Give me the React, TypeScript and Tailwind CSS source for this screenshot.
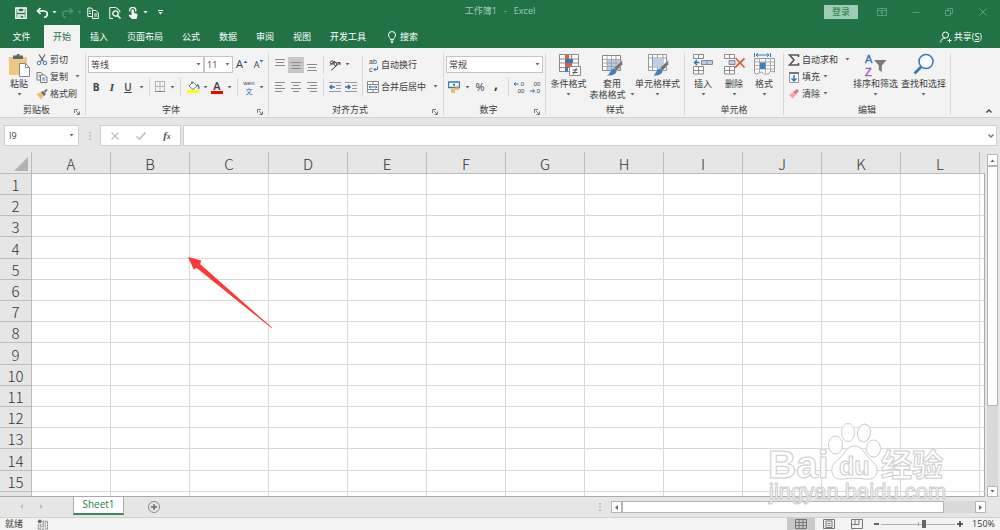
import { useState, type ReactNode } from "react";

/**
 * Spreadsheet window: title bar, ribbon, formula bar, cell grid,
 * sheet tabs and status bar.
 */

const COLUMNS = ["A", "B", "C", "D", "E", "F", "G", "H", "I", "J", "K", "L"];
const ROWS = Array.from({ length: 15 }, (_, i) => i + 1);
const TABS = ["插入", "页面布局", "公式", "数据", "审阅", "视图", "开发工具"];

function Caret({ className = "text-[#6a6a6a]" }: { className?: string }) {
  return (
    <svg viewBox="0 0 5 3" className={`h-[3px] w-[5px] shrink-0 ${className}`} aria-hidden="true">
      <path d="M.5 0h4L2.500 2.500z" fill="currentColor" />
    </svg>
  );
}

function Icon({ size = "size-3", box = "0 0 12 12", children }: { size?: string; box?: string; children: ReactNode }) {
  return (
    <svg viewBox={box} className={`${size} shrink-0`} fill="none" stroke="currentColor" strokeWidth={1} aria-hidden="true">
      {children}
    </svg>
  );
}

/* ---- Ribbon building blocks ---- */

function Group({ label, width, launcher, children }: { label: string; width: string; launcher?: boolean; children: ReactNode }) {
  return (
    <section aria-label={label} className={`flex shrink-0 flex-col ${width}`}>
      <div className="flex h-[51px] items-start">{children}</div>
      <div className="flex h-[15px] items-center">
        <span className="w-1" />
        <span className="flex-1 text-center">{label}</span>
        <span className={`flex justify-center pt-1 ${launcher ? "w-4" : "w-1"}`}>
          {launcher && (
            <button type="button" aria-label={`${label}设置`} className="text-[#777]">
              <Icon size="size-[6px]" box="0 0 6 6">
                <path d="M.5 4V.5H4M2 2l3 3M5.500 2.500v3h-3" />
              </Icon>
            </button>
          )}
        </span>
      </div>
    </section>
  );
}

function GroupLine() {
  return <div className="my-[2px] w-px shrink-0 bg-[#d8d8d8]" />;
}

function Line() {
  return <span className="h-[18px] w-px shrink-0 bg-[#d8d8d8]" />;
}

function SmallButton({ label, width = "w-4", active, children }: { label: string; width?: string; active?: boolean; children: ReactNode }) {
  return (
    <button
      type="button"
      aria-label={label}
      className={`flex h-4 shrink-0 items-center justify-center ${width} ${active ? "bg-[#c8c8c8]" : ""}`}
    >
      {children}
    </button>
  );
}

function TextButton({ icon, label, caret, wide }: { icon: ReactNode; label: string; caret?: boolean; wide?: boolean }) {
  return (
    <button type="button" className="flex h-[17px] items-center gap-[2px] whitespace-nowrap">
      {icon}
      <span>{label}</span>
      {caret && (
        <span className={wide ? "pl-[5px]" : "pl-px"}>
          <Caret />
        </span>
      )}
    </button>
  );
}

function BigButton({ icon, label, second, width }: { icon: ReactNode; label: string; second?: string; width: string }) {
  return (
    <button type="button" className={`flex shrink-0 flex-col items-center whitespace-nowrap pt-[2px] ${width}`}>
      {icon}
      <span className="h-[13px] leading-[13px]">{label}</span>
      <span className="flex h-[9px] items-center gap-1 leading-[9px]">
        {second}
        <Caret />
      </span>
    </button>
  );
}

function Combo({ label, value, width }: { label: string; value: string; width: string }) {
  return (
    <span className={`relative flex h-[17px] items-center border border-[#c6c6c6] bg-white ${width}`}>
      <select aria-label={label} className="h-full w-full appearance-none bg-transparent pl-[2px] text-[9px] text-[#444] outline-none">
        <option>{value}</option>
      </select>
      <span className="pointer-events-none absolute right-[2px] flex">
        <Caret />
      </span>
    </span>
  );
}

function Lines({ rows }: { rows: [number, number, number][] }) {
  return (
    <Icon>
      {rows.map(([x, y, w]) => (
        <path key={y} d={`M${x} ${y}.5h${w}`} stroke="#8c8c8c" />
      ))}
    </Icon>
  );
}

/* ---- Drawings for the large buttons ---- */

function PasteIcon() {
  return (
    <Icon size="size-6" box="0 0 24 24">
      <path d="M2 4h18v18H2z" fill="#edc87e" stroke="none" />
      <path d="M6 2.500h3.500a1.700 1.700 0 0 1 3.400 0H16V6H6z" fill="#666" stroke="none" />
      <path d="M12.500 10.500h6l4 4v9h-10z" fill="#fff" stroke="#888" />
      <path d="M18.500 10.500v4h4" stroke="#888" />
    </Icon>
  );
}

function ConditionalIcon() {
  return (
    <Icon size="size-6" box="0 0 24 24">
      <path d="M2.500 1.500h19v17h-19zM8.500 1.500v17M14.500 1.500v17M2.500 6h19M2.500 10h19M2.500 14.500h19" fill="#fff" stroke="#8a8a8a" />
      <path d="M8 2h4v4H8zM8 10h7v4H8z" fill="#dc5f3d" stroke="none" />
      <path d="M8 6h8v4H8zM8 14h3v4.500H8z" fill="#3d77bb" stroke="none" />
      <path d="M12.500 13.500h11v9h-11z" fill="#fff" stroke="#888" />
      <path d="M15.500 17h5M15.500 19.500h5M19.500 15l-3 6.500" stroke="#555" />
    </Icon>
  );
}

function Brush() {
  return (
    <>
      <path d="M22.500 7v4.500l-6 6.500-3-3z" fill="#747474" stroke="#f2f2f2" strokeWidth={0.5} />
      <path d="M14 15.500l2.500 2.500c0 3-4 5-9.500 4.500 3-1 3-6 7-7z" fill="#3f7fc1" stroke="none" />
    </>
  );
}

function TableFormatIcon() {
  return (
    <Icon size="size-6" box="0 0 24 24">
      <path d="M2.500 2.500h18v15h-18z" fill="#fff" stroke="#888" />
      <path d="M7 6.500h13v10.500H7z" fill="#b9d2ec" stroke="none" />
      <path d="M2.500 6.500h18M2.500 10h18M2.500 13.500h18M7 2.500v15M11.500 2.500v15M16 2.500v15" stroke="#999" strokeWidth={0.8} />
      <Brush />
    </Icon>
  );
}

function CellStyleIcon() {
  return (
    <Icon size="size-6" box="0 0 24 24">
      <path d="M2.500 1.500h18v16h-18zM2.500 5h18M2.500 14h18M6.500 1.500v16M17 1.500v16M11.500 1.500V5M11.500 14v3.500" fill="#fff" stroke="#999" />
      <path d="M7 5.500h10v8H7z" fill="#b9d2ec" stroke="none" />
      <Brush />
    </Icon>
  );
}

function InsertIcon() {
  return (
    <Icon size="size-6" box="0 0 24 24">
      <path d="M2.500 1.500h10v4h-10zM7.500 1.500v4M2.500 13.500h10v7.500h-10zM7.500 13.500V21M2.500 17.500h10" fill="#fff" stroke="#8a8a8a" />
      <path d="M10.500 7.500h11v4h-11zM16 7.500v4" fill="#b9d2ec" stroke="#888" />
      <path d="M8.500 9.500h-5M6 7L3.500 9.500 6 12" stroke="#2f74bd" strokeWidth={1.400} />
    </Icon>
  );
}

function DeleteIcon() {
  return (
    <Icon size="size-6" box="0 0 24 24">
      <path d="M2.500 1.500h10v4h-10zM7.500 1.500v4M2.500 13.500h10v7.500h-10zM7.500 13.500V21M2.500 17.500h10" fill="#fff" stroke="#8a8a8a" />
      <path d="M7 7.500h6v4H7z" fill="#b9d2ec" stroke="#888" />
      <path d="M13.500 5l9 9.500M22.500 5.500l-9.500 9" stroke="#e0603d" strokeWidth={1.800} />
    </Icon>
  );
}

function FormatIcon() {
  return (
    <Icon size="size-6" box="0 0 24 24">
      <path d="M2.500 0v4M18.500 0v4M4 2h13M6 .3L4 2l2 1.700M15 .3L17 2l-2 1.700" stroke="#3578bd" />
      <path d="M2.500 5.500h20V19l-4-1-2 3h-4l-3-2-5 2-2-1z" fill="#fff" stroke="#999" />
      <path d="M2.500 9h20M2.500 16h20M7.500 5.500v14M13.500 5.500V20M18.500 5.500V18M2.500 12.500h20" stroke="#aaa" />
      <path d="M8 9.500h5.500V16H8z" fill="#3f7fc1" stroke="none" />
    </Icon>
  );
}

function SortIcon() {
  return (
    <svg viewBox="0 0 24 24" className="size-6 shrink-0" aria-hidden="true">
      <text x="1" y="10" className="font-['Liberation_Sans'] text-[11px]" fill="#3173b8" stroke="#3173b8" strokeWidth=".4">A</text>
      <text x="1" y="23" className="font-['Liberation_Sans'] text-[11px]" fill="#9956b5" stroke="#9956b5" strokeWidth=".4">Z</text>
      <path d="M10 7h12.500l-4.700 5.500V19l-3-2v-4.500z" fill="#7a7a7a" />
    </svg>
  );
}

function FindIcon() {
  return (
    <Icon size="size-6" box="0 0 24 24">
      <circle cx="14" cy="8.500" r="7" fill="#fff" stroke="#3b79bb" strokeWidth={1.600} />
      <path d="M9 14l-6.500 6.500" stroke="#3b79bb" strokeWidth={2.800} />
    </Icon>
  );
}

/* ---- Window parts ---- */

function TitleBar() {
  return (
    <header className="flex h-[25px] shrink-0 items-center text-white">
      <div className="flex flex-1 items-center">
        <span className="w-[15px]" />
        <SmallButton label="保存" width="w-3">
          <Icon>
            <path d="M.8 1h10.400v10.400H.8zM3 1v4h6V1M3 11.400V8h6v3.400M5 9v2" strokeWidth={1.400} />
          </Icon>
        </SmallButton>
        <span className="w-[9px]" />
        <SmallButton label="撤消" width="w-3">
          <Icon>
            <path d="M4.500 1L1.500 4l3 3M2 4h5.500C12.500 4 12.500 10 8 10.500" strokeWidth={1.700} />
          </Icon>
        </SmallButton>
        <span className="w-1" />
        <Caret className="text-white" />
        <span className="w-[5px]" />
        <SmallButton label="恢复" width="w-3">
          <span className="text-[#4f9370]">
            <Icon>
              <path d="M7.500 1l3 3-3 3M10 4H4.500C-.5 4-.5 10 4 10.500" strokeWidth={1.400} />
            </Icon>
          </span>
        </SmallButton>
        <span className="w-[3px]" />
        <Caret className="text-[#4f9370]" />
        <span className="w-[5px]" />
        <SmallButton label="复制" width="w-3">
          <Icon>
            <path d="M5 9.500H.8V1h3.500l2 2M5.500 3.500h3.500l2.300 2.300v5.700H5.500zM7 7h3M7 9h3M2 4h2M2 6.500h2" />
          </Icon>
        </SmallButton>
        <span className="w-[10px]" />
        <SmallButton label="打印预览" width="w-3">
          <Icon>
            <path d="M4 11.500H.8V.5h6l4 3v2" />
            <circle cx="6.500" cy="6.500" r="2.700" strokeWidth={1.300} />
            <path d="M8.500 8.500l3 3" strokeWidth={1.500} />
          </Icon>
        </SmallButton>
        <span className="w-[6px]" />
        <SmallButton label="触摸/鼠标模式" width="w-3">
          <Icon>
            <path d="M3 4.500a3 3 0 1 1 5.500 0" strokeWidth={1.300} />
            <path d="M4.500 3.500a1.200 1.200 0 0 1 2.400 0V6l3 .8c.7.2.7 1 .5 2L9.500 12H5L1.500 8.500l1-1 2 1z" fill="currentColor" stroke="none" />
          </Icon>
        </SmallButton>
        <span className="w-1" />
        <Caret className="text-white" />
        <span className="w-[10px]" />
        <button type="button" aria-label="自定义快速访问工具栏" className="flex flex-col items-center gap-px">
          <span className="h-px w-[5px] bg-white" />
          <Caret className="text-white" />
        </button>
      </div>
      <h1 className="whitespace-pre pb-[3px] text-[9px] text-[#a3cab4]">工作簿1   -   Excel</h1>
      <div className="flex flex-1 items-center justify-end pb-[2px] text-[#5b9c79]">
        <button type="button" className="mr-[18px] h-[14px] w-[34px] bg-[#9fcdb3] leading-[14px] text-[#217346]">登录</button>
        <SmallButton label="功能区显示选项" width="w-3">
          <Icon>
            <path d="M1.500 2.500h9v7h-9zM1.500 4.500h9M6 9V6M4.500 7L6 5.500 7.500 7" />
          </Icon>
        </SmallButton>
        <span className="w-[22px]" />
        <SmallButton label="最小化" width="w-3">
          <Icon><path d="M2.500 6.500h7" /></Icon>
        </SmallButton>
        <span className="w-[21px]" />
        <SmallButton label="还原" width="w-3">
          <Icon><path d="M2.500 4.500h5v5h-5zM4.500 4.500v-2h5v5h-2" /></Icon>
        </SmallButton>
        <span className="w-[22px]" />
        <SmallButton label="关闭" width="w-3">
          <Icon><path d="M2.500 2.500l7 7M9.500 2.500l-7 7" /></Icon>
        </SmallButton>
        <span className="w-[11px]" />
      </div>
    </header>
  );
}

function TabBar() {
  return (
    <nav className="flex h-[23px] shrink-0 items-stretch gap-px text-white">
      <button type="button" className="w-[43px]">文件</button>
      <button type="button" className="w-9 bg-[#f3f3f3] text-[#217346]">开始</button>
      {TABS.map((tab) => (
        <button key={tab} type="button" className="px-[9px]">{tab}</button>
      ))}
      <button type="button" className="ml-[10px] flex items-center gap-[2px]">
        <Icon>
          <path d="M4.500 8.500C4.500 7 2.500 6 2.500 4a3.500 3.500 0 0 1 7 0c0 2-2 3-2 4.500zM4.500 10h3M5 11.500h2" />
        </Icon>
        搜索
      </button>
      <span className="flex-1" />
      <button type="button" className="mr-[18px] flex items-center gap-[2px]">
        <Icon>
          <circle cx="5.500" cy="4" r="3" />
          <path d="M.7 11.500c0-3 2-4.500 4.500-4.500M9.500 7.500v4M7.500 9.500h4" />
        </Icon>
        <span>共享(<u>S</u>)</span>
      </button>
    </nav>
  );
}

function Ribbon() {
  return (
    <div className="flex h-[70px] shrink-0 overflow-hidden border-b border-[#d2d2d2] bg-[#f3f3f3] pt-[3px]">
      <Group label="剪贴板" width="w-[85px]" launcher>
        <div className="w-9 pl-px">
          <BigButton icon={<PasteIcon />} label="粘贴" width="w-9" />
        </div>
        <div className="flex flex-col">
          <TextButton
            label="剪切"
            icon={
              <Icon>
                <path d="M3 .5l4.500 7M9 .5L4.500 7.500" stroke="#666" strokeWidth={1.300} />
                <circle cx="3" cy="9" r="1.800" stroke="#3b79bb" />
                <circle cx="9" cy="9" r="1.800" stroke="#3b79bb" />
              </Icon>
            }
          />
          <TextButton
            label="复制"
            caret
            wide
            icon={
              <Icon>
                <path d="M1 1.500h4l1.500 1.500v6H1z" fill="#fff" stroke="#777" />
                <path d="M4.500 4h4l2.500 2v5.500H4.500z" fill="#fff" stroke="#777" />
                <path d="M6 7h3.500M6 9h3.500M2.500 4h1.500M2.500 6h1.500" stroke="#3b79bb" />
              </Icon>
            }
          />
          <TextButton
            label="格式刷"
            icon={
              <Icon>
                <path d="M.5 6l5-2 2.500 3.500L5 11.500z" fill="#edbd72" stroke="none" />
                <path d="M5 4l2-1 3 3-2 2z" fill="#666" stroke="none" />
                <path d="M8.500 4L11 1.500" stroke="#777" strokeWidth={1.800} />
              </Icon>
            }
          />
        </div>
      </Group>
      <GroupLine />

      <Group label="字体" width="w-[182px]" launcher>
        <div className="flex flex-col gap-[5px] pl-[2px] pt-[5px]">
          <div className="flex items-center">
            <Combo label="字体名称" value="等线" width="w-[116px]" />
            <Combo label="字号" value="11" width="w-[29px]" />
            <SmallButton label="增大字号" width="w-[18px]">
              <span className="text-[11px]">A</span>
              <span className="pb-[6px] text-[#2f74bd]">
                <Icon size="h-[3px] w-[5px]" box="0 0 5 3"><path d="M.5 3h4L2.500.500z" fill="currentColor" stroke="none" /></Icon>
              </span>
            </SmallButton>
            <SmallButton label="减小字号">
              <span className="text-[9px]">A</span>
              <span className="pb-[7px]"><Caret className="text-[#2f74bd]" /></span>
            </SmallButton>
          </div>
          <div className="flex items-center text-[10px]">
            <SmallButton label="加粗"><b>B</b></SmallButton>
            <SmallButton label="倾斜"><i className="font-['Liberation_Serif'] text-[11px] font-bold">I</i></SmallButton>
            <SmallButton label="下划线"><b className="font-semibold underline">U</b></SmallButton>
            <SmallButton label="下划线样式" width="w-[10px]"><Caret /></SmallButton>
            <span className="w-[3px]" /><Line /><span className="w-[3px]" />
            <SmallButton label="边框" width="w-[14px]">
              <Icon>
                <path d="M1 .5h10M1 5.500h10M1.500 1v10M6 1v10M10.500 1v10" stroke="#b4b4b4" />
                <path d="M1 10.500h10" stroke="#888" />
              </Icon>
            </SmallButton>
            <SmallButton label="边框样式" width="w-[10px]"><Caret /></SmallButton>
            <span className="w-[3px]" /><Line /><span className="w-[5px]" />
            <SmallButton label="填充颜色" width="w-[14px]">
              <Icon size="h-3 w-[13px]" box="0 0 13 12">
                <path d="M2 5l4-4 4 4-4 3.500z" fill="#fff" stroke="#777" />
                <path d="M5 3V.5M10 3.500c2 1 2 3 1.500 4.500" stroke="#3b79bb" strokeWidth={1.500} />
                <path d="M.5 9h12v3H.5z" fill="#ff0" stroke="none" />
              </Icon>
            </SmallButton>
            <SmallButton label="填充颜色选项" width="w-[10px]"><Caret /></SmallButton>
            <SmallButton label="字体颜色" width="w-[14px]">
              <span className="flex flex-col items-center">
                <span className="h-[10px] text-[11px] font-semibold leading-[10px]">A</span>
                <span className="h-[3px] w-3 bg-[#f00]" />
              </span>
            </SmallButton>
            <SmallButton label="字体颜色选项" width="w-[10px]"><Caret /></SmallButton>
            <span className="w-[3px]" /><Line /><span className="w-1" />
            <SmallButton label="拼音" width="w-[14px]">
              <svg viewBox="0 0 14 18" className="h-[18px] w-[14px] shrink-0" aria-hidden="true">
                <text x="7" y="7" textAnchor="middle" className="font-['Liberation_Sans'] text-[6px]" fill="#444">wén</text>
                <text x="7" y="16" textAnchor="middle" className="font-['Noto_Sans_CJK_SC'] text-[7px]" fill="#2f74bd">文</text>
              </svg>
            </SmallButton>
            <SmallButton label="拼音选项" width="w-[10px]"><Caret /></SmallButton>
          </div>
        </div>
      </Group>
      <GroupLine />

      <Group label="对齐方式" width="w-[174px]" launcher>
        <div className="flex flex-col gap-[5px] pl-[3px] pt-[5px]">
          <div className="flex h-[17px] items-center">
            <SmallButton label="顶端对齐"><Lines rows={[[1, 0, 10], [2, 3, 8], [1, 6, 10]]} /></SmallButton>
            <SmallButton label="垂直居中" active><Lines rows={[[1, 3, 10], [2, 6, 8], [1, 9, 10]]} /></SmallButton>
            <SmallButton label="底端对齐"><Lines rows={[[1, 5, 10], [2, 8, 8], [1, 11, 10]]} /></SmallButton>
            <span className="w-[3px]" /><Line /><span className="w-[3px]" />
            <SmallButton label="方向" width="w-4">
              <Icon>
                <circle cx="3" cy="3.500" r="1.600" />
                <circle cx="6.500" cy="5" r="1.600" />
                <path d="M1 6.500l4-4M5 2l2.500 2.500M2 11.500l9-8M8.500 3.500H11V6" />
              </Icon>
            </SmallButton>
            <SmallButton label="方向选项" width="w-2"><Caret /></SmallButton>
          </div>
          <div className="flex items-center">
            <SmallButton label="左对齐"><Lines rows={[[1, 1, 10], [1, 4, 7], [1, 7, 10], [1, 10, 7]]} /></SmallButton>
            <SmallButton label="居中"><Lines rows={[[1, 1, 10], [3, 4, 6], [1, 7, 10], [3, 10, 6]]} /></SmallButton>
            <SmallButton label="右对齐"><Lines rows={[[1, 1, 10], [4, 4, 7], [1, 7, 10], [4, 10, 7]]} /></SmallButton>
            <span className="w-[3px]" /><Line /><span className="w-[3px]" />
            <SmallButton label="减少缩进量">
              <Icon>
                <path d="M0 1.500h12M7 4.500h5M7 7.500h5M0 10.500h12" stroke="#999" />
                <path d="M6 6H1M3 4L1 6l2 2" stroke="#2f74bd" strokeWidth={1.500} />
              </Icon>
            </SmallButton>
            <SmallButton label="增加缩进量">
              <Icon>
                <path d="M0 1.500h12M7 4.500h5M7 7.500h5M0 10.500h12" stroke="#999" />
                <path d="M0 6h5M3 4l2 2-2 2" stroke="#2f74bd" strokeWidth={1.500} />
              </Icon>
            </SmallButton>
          </div>
        </div>
        <div className="ml-[3px] mt-[5px] h-[41px] w-px bg-[#d8d8d8]" />
        <div className="flex flex-col gap-[5px] pl-1 pt-[5px]">
          <TextButton
            label="自动换行"
            icon={
              <svg viewBox="0 0 12 18" className="h-[18px] w-3 shrink-0" aria-hidden="true">
                <text x="2" y="8" className="font-['Liberation_Sans'] text-[7px]" fill="#444">ab</text>
                <text x="2" y="16" className="font-['Liberation_Sans'] text-[7px]" fill="#444">c</text>
                <path d="M10.500 10.500v3H7M8.500 12L7 13.500 8.500 15" fill="none" stroke="#2f74bd" />
              </svg>
            }
          />
          <TextButton
            label="合并后居中"
            caret
            wide
            icon={
              <Icon>
                <path d="M.5.500h11v11H.5zM.5 3.500h11M.5 8.500h11M6 .5v3M6 8.500v3" fill="#fff" stroke="#888" />
                <path d="M2 6h8M3.500 4.700L2 6l1.500 1.300M8.500 4.700L10 6 8.500 7.300" stroke="#2f74bd" />
              </Icon>
            }
          />
        </div>
      </Group>
      <GroupLine />

      <Group label="数字" width="w-[101px]" launcher>
        <div className="flex flex-col gap-[5px] pl-[2px] pt-[5px]">
          <Combo label="数字格式" value="常规" width="w-[97px]" />
          <div className="flex items-center">
            <SmallButton label="会计数字格式">
              <Icon>
                <path d="M.5 1h11v5.500H.5z" fill="#fff" stroke="#3b79bb" strokeWidth={1.400} />
                <circle cx="6" cy="3.700" r="1.200" fill="#3b79bb" stroke="none" />
                <path d="M7 6h4M7 8h4M3 9h4M3 11h4" stroke="#e6a94c" strokeWidth={1.500} />
              </Icon>
            </SmallButton>
            <SmallButton label="货币选项" width="w-[10px]"><Caret /></SmallButton>
            <SmallButton label="百分比样式"><span className="text-[11px]">%</span></SmallButton>
            <SmallButton label="千位分隔样式"><b className="pb-2 text-[14px]">,</b></SmallButton>
            <span className="w-1" /><Line /><span className="w-[2px]" />
            <SmallButton label="增加小数位数">
              <svg viewBox="0 0 12 14" className="h-[14px] w-3 shrink-0" aria-hidden="true">
                <text x="6" y="6" className="font-['Liberation_Sans'] text-[6px]" fill="#444">.0</text>
                <text x="3" y="13" className="font-['Liberation_Sans'] text-[6px]" fill="#444">.00</text>
                <path d="M5.500 4H1M2.800 2.300L1 4l1.800 1.700" fill="none" stroke="#2f74bd" />
              </svg>
            </SmallButton>
            <SmallButton label="减少小数位数">
              <svg viewBox="0 0 12 14" className="h-[14px] w-3 shrink-0" aria-hidden="true">
                <text x="3" y="6" className="font-['Liberation_Sans'] text-[6px]" fill="#444">.00</text>
                <text x="6" y="13" className="font-['Liberation_Sans'] text-[6px]" fill="#444">.0</text>
                <path d="M1 11h4.500M3.700 9.300L5.500 11l-1.800 1.700" fill="none" stroke="#2f74bd" />
              </svg>
            </SmallButton>
          </div>
        </div>
      </Group>
      <GroupLine />

      <Group label="样式" width="w-[138px]">
        <BigButton icon={<ConditionalIcon />} label="条件格式" width="w-[45px]" />
        <BigButton icon={<TableFormatIcon />} label="套用" second="表格格式" width="w-[42px]" />
        <BigButton icon={<CellStyleIcon />} label="单元格样式" width="w-[49px]" />
      </Group>
      <GroupLine />

      <Group label="单元格" width="w-[98px]">
        <span className="w-[2px]" />
        <BigButton icon={<InsertIcon />} label="插入" width="w-8" />
        <BigButton icon={<DeleteIcon />} label="删除" width="w-[30px]" />
        <BigButton icon={<FormatIcon />} label="格式" width="w-[30px]" />
      </Group>
      <GroupLine />

      <Group label="编辑" width="w-[166px]">
        <div className="flex w-[68px] flex-col pl-1">
          <TextButton
            label="自动求和"
            caret
            wide
            icon={<Icon><path d="M10.500 3V1H1.500L6 6l-4.500 5h9V9" stroke="#555" strokeWidth={1.600} /></Icon>}
          />
          <TextButton
            label="填充"
            caret
            icon={
              <Icon>
                <path d="M1.500 1.500h9v10h-9z" fill="#fff" stroke="#999" />
                <path d="M1 1h10v2H1z" fill="#777" stroke="none" />
                <path d="M6 4v6M3.500 7.500L6 10l2.500-2.500" stroke="#2f74bd" strokeWidth={1.500} />
              </Icon>
            }
          />
          <TextButton
            label="清除"
            caret
            icon={
              <Icon>
                <path d="M1 7l3.500-2.500 3 3L4.500 10.500z" fill="#f3a6b2" stroke="none" />
                <path d="M5 4l4-3 2 2-3.500 4z" fill="#e8748a" stroke="none" />
              </Icon>
            }
          />
        </div>
        <BigButton icon={<SortIcon />} label="排序和筛选" width="w-[47px]" />
        <BigButton icon={<FindIcon />} label="查找和选择" width="w-[49px]" />
      </Group>
      <GroupLine />
      <div className="flex flex-1 items-end justify-end pb-[3px] pr-2">
        <button type="button" aria-label="折叠功能区">
          <Icon size="size-[6px]" box="0 0 6 6"><path d="M.5 4.500L3 2l2.500 2.500" strokeWidth={1.300} /></Icon>
        </button>
      </div>
    </div>
  );
}

function FormulaBar() {
  return (
    <div className="flex h-[34px] shrink-0 items-start bg-[#e6e6e6] pl-1 pr-[3px] pt-[7px] text-[#777]">
      <div className="flex h-[21px] w-[75px] items-center border border-[#cfcfcf] bg-white pr-1">
        <input aria-label="名称框" defaultValue="I9" className="w-full min-w-0 bg-transparent pl-1 text-[9px] text-[#444] outline-none" />
        <Caret />
      </div>
      <span className="flex h-[21px] w-[21px] items-center justify-center text-[#a0a0a0]">
        <Icon size="h-2 w-[2px]" box="0 0 2 8"><path d="M1 0v8" strokeWidth={1.300} strokeDasharray="1.300 2" /></Icon>
      </span>
      <div className="flex h-[21px] w-[81px] items-center border border-[#cfcfcf] bg-white">
        <button type="button" aria-label="取消" className="flex w-[27px] justify-center text-[#bdbdbd]">
          <Icon size="size-2" box="0 0 8 8"><path d="M.5.500l7 7M7.500.500l-7 7" strokeWidth={1.300} /></Icon>
        </button>
        <button type="button" aria-label="输入" className="flex w-[26px] justify-center text-[#bdbdbd]">
          <Icon size="h-2 w-[10px]" box="0 0 10 8"><path d="M.5 4.500l3 2.500L9.500.500" strokeWidth={1.600} /></Icon>
        </button>
        <button type="button" aria-label="插入函数" className="flex w-[26px] items-baseline justify-center font-['Liberation_Serif'] font-bold italic text-[#555]">
          <span className="text-[11px]">f</span>
          <span className="text-[8px]">x</span>
        </button>
      </div>
      <div className="ml-[2px] flex h-[21px] flex-1 items-center border border-[#cfcfcf] bg-white pr-[2px]">
        <input aria-label="编辑栏" className="w-full min-w-0 bg-transparent px-1 text-[9px] outline-none" />
        <Icon size="size-[6px]" box="0 0 6 6"><path d="M.5 1.500L3 4l2.500-2.500" strokeWidth={1.500} /></Icon>
      </div>
    </div>
  );
}

function Arrow() {
  return (
    <svg viewBox="0 0 84 71" className="pointer-events-none absolute left-[188px] top-[105px] h-[71px] w-[84px]" aria-hidden="true">
      <path d="M0 0l13.300 3.600-1.300 3.400L84 70.500l-.6.500L8.700 11l-3 1.500z" fill="#fb3a37" />
    </svg>
  );
}

function Watermark() {
  return (
    <svg
      viewBox="0 0 180 90"
      className="pointer-events-none absolute right-[54px] top-[268px] h-[90px] w-[180px]"
      fill="#fff"
      fillOpacity={0.85}
      stroke="#cdcdcd"
      strokeWidth={1}
      aria-label="Baidu 经验"
    >
      <text x="2" y="58" className="font-['Liberation_Sans'] text-[39px] font-bold">Bai</text>
      <ellipse cx="69.500" cy="25" rx="7" ry="9" />
      <ellipse cx="82" cy="12.500" rx="6.500" ry="9" />
      <ellipse cx="98" cy="13" rx="6.500" ry="9" transform="rotate(10 98 13)" />
      <ellipse cx="107.500" cy="28.500" rx="7" ry="8.500" />
      <path d="M88 26c-7 0-9 7-14 12-5 4-9 7-8 14 1 6 6 8 12 7 7-1 13-1 20 0 7 1 12-1 13-7 1-6-4-10-8-14-5-5-7-12-15-12z" />
      <text x="73" y="55" className="font-['Liberation_Sans'] text-[25px] font-bold">du</text>
      <text x="115" y="56" className="font-['Noto_Sans_CJK_SC'] text-[31px] font-bold">经验</text>
      <text x="3" y="79" className="font-['Liberation_Sans'] text-[22px]">jingyan.baidu.com</text>
    </svg>
  );
}

function Sheet() {
  return (
    <main className="relative flex min-h-0 flex-1 bg-[#e6e6e6]">
      <div className="min-w-0 flex-1 overflow-hidden border-b border-[#ababab]">
        <table className="w-full table-fixed border-separate border-spacing-0 font-['Noto_Sans_CJK_SC','Open_Sans',sans-serif] text-[15px] font-light leading-[19px] text-[#333]">
          <colgroup>
            <col className="w-8" />
            {COLUMNS.map((c) => (
              <col key={c} className="w-[79px]" />
            ))}
            <col />
          </colgroup>
          <thead>
            <tr className="h-[22px]">
              <th className="border-b border-r border-[#bcbcbc] p-0">
                <svg viewBox="0 0 14 14" className="ml-[14px] mt-[2px] size-[14px]" aria-hidden="true">
                  <path d="M14 0v14H0z" fill="#b2b2b2" />
                </svg>
              </th>
              {COLUMNS.map((c) => (
                <th key={c} scope="col" className="border-b border-r border-[#bcbcbc] p-0 pt-[2px] align-middle font-light">{c}</th>
              ))}
              <th className="border-b border-[#bcbcbc] p-0" />
            </tr>
          </thead>
          <tbody>
            {ROWS.map((n) => (
              <tr key={n} className={n % 5 === 4 ? "h-[22px]" : "h-[21px]"}>
                <th scope="row" className="border-b border-r border-[#bcbcbc] p-0 pt-px font-light">{n}</th>
                {COLUMNS.map((c) => (
                  <td key={c} className="border-b border-r border-[#d9d9d9] bg-white p-0" />
                ))}
                <td className="border-b border-r border-b-[#d9d9d9] border-r-[#ababab] bg-white p-0" />
              </tr>
            ))}
            <tr className="h-[21px]">
              <th scope="row" className="border-r border-[#bcbcbc] p-0" />
              {COLUMNS.map((c) => (
                <td key={c} className="border-r border-[#d9d9d9] bg-white p-0" />
              ))}
              <td className="border-r border-[#ababab] bg-white p-0" />
            </tr>
          </tbody>
        </table>
      </div>
      <div className="flex w-[15px] flex-col items-center bg-[#e6e6e6] pt-[2px]">
        <button type="button" aria-label="向上滚动" className="flex h-3 w-[11px] shrink-0 items-center justify-center border border-[#b5b5b5] bg-white">
          <span className="rotate-180"><Caret className="block text-[#666]" /></span>
        </button>
        <div className="flex w-[11px] flex-1 flex-col bg-[#dadada]">
          <div className="h-3/4 border border-[#b5b5b5] bg-white" />
        </div>
        <button type="button" aria-label="向下滚动" className="flex h-[11px] w-[11px] shrink-0 items-center justify-center border border-[#b5b5b5] bg-white">
          <Caret className="text-[#666]" />
        </button>
      </div>
      <Arrow />
      <Watermark />
    </main>
  );
}

function SideCaret({ flip, className = "text-[#666]" }: { flip?: boolean; className?: string }) {
  return (
    <svg viewBox="0 0 3 5" className={`h-[5px] w-[3px] ${className}`} aria-hidden="true">
      <path d={flip ? "M3 0v5L0 2.500z" : "M0 0v5l3-2.500z"} fill="currentColor" />
    </svg>
  );
}

function SheetTabs() {
  return (
    <div className="flex h-5 shrink-0 items-start bg-[#e6e6e6]">
      <div className="flex h-[19px] w-[73px] items-center gap-[17px] pl-5">
        <button type="button" aria-label="上一张工作表"><SideCaret flip className="text-[#bdbdbd]" /></button>
        <button type="button" aria-label="下一张工作表"><SideCaret className="text-[#bdbdbd]" /></button>
      </div>
      <button type="button" className="-mt-px h-[19px] w-[51px] border-x border-b-2 border-x-[#ababab] border-b-[#3c8a5e] bg-white text-[10px] leading-[17px] text-[#2b7d50]">
        Sheet1
      </button>
      <button type="button" aria-label="新工作表" className="ml-6 mt-1 text-[#888]">
        <Icon>
          <circle cx="6" cy="6" r="5.500" />
          <path d="M6 3v6M3 6h6" stroke="#666" strokeWidth={1.400} />
        </Icon>
      </button>
      <span className="flex-1" />
      <span className="mr-[10px] mt-[6px] text-[#999]">
        <Icon size="h-2 w-[2px]" box="0 0 2 8"><path d="M1 0v8" strokeWidth={1.300} strokeDasharray="1.300 2" /></Icon>
      </span>
      <div className="mr-[14px] mt-1 flex h-3 w-3/8 bg-[#dadada]">
        <button type="button" aria-label="向左滚动" className="flex w-[11px] items-center justify-center border border-[#b5b5b5] bg-white"><SideCaret flip /></button>
        <div className="w-[322px] border border-[#b5b5b5] bg-white" />
        <span className="flex-1" />
        <button type="button" aria-label="向右滚动" className="flex w-[11px] items-center justify-center border border-[#b5b5b5] bg-white"><SideCaret /></button>
      </div>
    </div>
  );
}

function StatusBar() {
  const [zoom, setZoom] = useState(150);
  const views: [string, string][] = [
    ["普通", "M.5 1.500h11v9H.5zM.5 4.500h11M.5 7.500h11M4 1.500v9M8 1.500v9"],
    ["页面布局", "M.5 1.500h11v9H.5zM3 3v6.500h6V3zM4.500 5.500h3M4.500 7.500h3"],
    ["分页预览", "M.5 1.500h11v9H.5zM4 1.500v5M8 1.500v5M.5 6.500H8"],
  ];
  return (
    <footer className="flex h-[13px] shrink-0 items-center border-t border-[#d0d0d0] bg-[#f3f3f3] pl-[5px] pr-[5px] leading-[12px]">
      <span>就绪</span>
      <button type="button" aria-label="录制宏" className="ml-[14px] text-[#666]">
        <Icon size="size-[11px]" box="0 0 12 12">
          <circle cx="3" cy="2.500" r="2" fill="currentColor" stroke="none" />
          <path d="M6 2.500h5.500v8.500H1.500V6M3 6.500h7M3 8.500h7M6 4.500h4" strokeDasharray="2 1" />
        </Icon>
      </button>
      <span className="flex-1" />
      {views.map(([name, d], i) => (
        <button
          key={name}
          type="button"
          aria-label={name}
          className={`flex h-3 w-7 items-center justify-center text-[#777] ${i === 0 ? "bg-[#c8c8c8]" : ""}`}
        >
          <Icon><path d={d} /></Icon>
        </button>
      ))}
      <button type="button" aria-label="缩小" className="ml-[3px] flex w-[5px] items-center"><span className="h-[2px] w-[5px] bg-[#666]" /></button>
      <span className="relative ml-[2px] flex h-3 w-[74px] items-center">
        <span className="absolute left-[37px] h-1 w-px bg-[#aaa]" />
        <input
          type="range"
          aria-label="缩放级别"
          min={10}
          max={250}
          value={zoom}
          onChange={(e) => setZoom(Number(e.target.value))}
          className="relative h-2 w-full appearance-none bg-transparent [&::-webkit-slider-runnable-track]:h-px [&::-webkit-slider-runnable-track]:bg-[#b0b0b0] [&::-webkit-slider-thumb]:-mt-[4px] [&::-webkit-slider-thumb]:h-2 [&::-webkit-slider-thumb]:w-1 [&::-webkit-slider-thumb]:appearance-none [&::-webkit-slider-thumb]:bg-[#666]"
        />
      </span>
      <button type="button" aria-label="放大" className="ml-[2px]"><Icon size="size-[6px]" box="0 0 6 6"><path d="M3 0v6M0 3h6" strokeWidth={1.500} /></Icon></button>
      <span className="w-8 text-right">{zoom}%</span>
    </footer>
  );
}

export default function App() {
  return (
    <div className="flex h-screen flex-col overflow-hidden bg-[#217346] font-['Open_Sans','Noto_Sans_CJK_SC',sans-serif] text-[9px] text-[#3c3c3c]">
      <TitleBar />
      <TabBar />
      <Ribbon />
      <FormulaBar />
      <Sheet />
      <SheetTabs />
      <StatusBar />
    </div>
  );
}
